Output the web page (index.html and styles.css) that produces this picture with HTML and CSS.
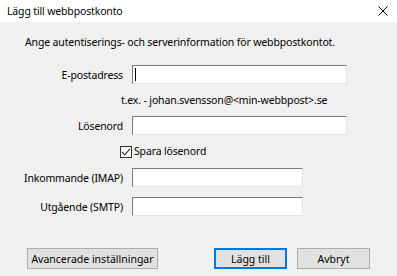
FILE: index.html
```html
<!DOCTYPE html>
<html lang="sv">
<head>
    <meta charset="UTF-8">
    <title>Lägg till webbpostkonto</title>
    <link rel="stylesheet" href="styles.css">
</head>
<body>

<div class="titlebar">
    <span class="title">Lägg till webbpostkonto</span>
    <span class="close">
        <svg width="10" height="10" viewBox="0 0 10 10">
            <path d="M0.5 0.5 L9.5 9.5 M9.5 0.5 L0.5 9.5" stroke="#000" stroke-width="1" fill="none"/>
        </svg>
    </span>
</div>

<div class="dialog">
    <p class="intro">Ange autentiserings- och serverinformation för webbpostkontot.</p>

    <div class="form">
        <label class="field-label" for="email">E-postadress</label>
        <div class="input-wrap">
            <input type="text" id="email" class="text-input wide">
            <span class="caret"></span>
        </div>

        <div class="hint">t.ex. - johan.svensson@&lt;min-webbpost&gt;.se</div>

        <label class="field-label" for="password">Lösenord</label>
        <input type="password" id="password" class="text-input wide">

        <label class="check">
            <span class="check-box">
                <svg width="10" height="10" viewBox="0 0 10 10">
                    <path d="M1 5 L3.8 7.8 L9 1.8" stroke="#222" stroke-width="1.1" fill="none"/>
                </svg>
            </span>
            Spara lösenord
        </label>

        <label class="field-label" for="imap">Inkommande (IMAP)</label>
        <input type="text" id="imap" class="text-input narrow">

        <label class="field-label" for="smtp">Utgående (SMTP)</label>
        <input type="text" id="smtp" class="text-input narrow">
    </div>

    <div class="buttons">
        <button class="btn advanced">Avancerade inställningar</button>
        <div class="btn-group">
            <button class="btn default">Lägg till</button>
            <button class="btn">Avbryt</button>
        </div>
    </div>
</div>

</body>
</html>
```

FILE: styles.css
```css
body {
    font-family: 'Noto Sans', 'Open Sans', sans-serif;
    font-size: 10.5px;
    letter-spacing: -0.15px;
    color: #000;
    background-color: #f0f0f0;
    margin: 0;
    width: 397px;
    height: 276px;
    overflow: hidden;
}

.titlebar {
    height: 22px;
    background-color: #fff;
    display: flex;
    align-items: center;
    justify-content: space-between;
    padding: 0 9px 0 7px;
}

.title {
    line-height: 16px;
}

.close {
    display: flex;
}

.dialog {
    padding: 12px 27px 0 25px;
}

.intro {
    margin: 0 0 15px;
    line-height: 16px;
    white-space: nowrap;
}

.form {
    display: grid;
    grid-template-columns: 98px 9px auto;
    row-gap: 10px;
    align-items: center;
}

.field-label {
    grid-column: 1 / 3;
    justify-self: end;
    margin-right: 9px;
    line-height: 14px;
    white-space: nowrap;
}

.input-wrap {
    position: relative;
    grid-column: 3;
    display: flex;
}

.caret {
    position: absolute;
    left: 3px;
    top: 3px;
    width: 1px;
    height: 13px;
    background-color: #000;
}

.text-input {
    grid-column: 3;
    box-sizing: border-box;
    height: 19px;
    margin: 0;
    padding: 0 3px;
    background-color: #fff;
    border: 1px solid;
    border-color: #7a7a7a #e3e3e3 #e3e3e3 #7a7a7a;
    font: inherit;
    outline: none;
}

.wide {
    width: 215px;
}

.narrow {
    width: 171px;
}

.hint {
    grid-column: 2 / 4;
    margin-left: -2px;
    line-height: 12px;
    white-space: nowrap;
}

.check {
    grid-column: 2 / 4;
    margin-left: -3px;
    display: flex;
    align-items: center;
    gap: 2px;
    height: 13px;
    line-height: 13px;
}

.check-box {
    box-sizing: border-box;
    width: 12px;
    height: 12px;
    border: 1px solid #333;
    background-color: #fff;
    display: flex;
    align-items: center;
    justify-content: center;
}

.buttons {
    margin-top: 32px;
    margin-left: 2px;
    display: flex;
    justify-content: space-between;
}

.btn-group {
    display: flex;
    gap: 10px;
}

.btn {
    box-sizing: border-box;
    height: 21px;
    width: 73px;
    padding: 0;
    background-color: #e1e1e1;
    border: 1px solid #adadad;
    font: inherit;
    color: #000;
    white-space: nowrap;
}

.btn.advanced {
    width: 131px;
}

.btn.default {
    border-color: #0078d7;
    box-shadow: inset 0 0 0 1px #0078d7;
}
```
